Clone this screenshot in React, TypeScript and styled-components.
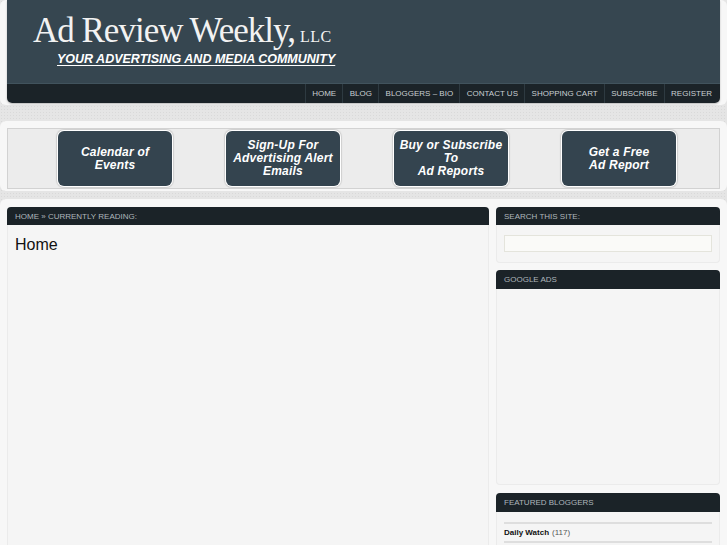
import React from "react";
import styled, { createGlobalStyle } from "styled-components";

const Global = createGlobalStyle`
  html, body { margin: 0; padding: 0; }
  body {
    background-color: #e5e5e5;
    background-image: radial-gradient(#d9d9d9 0.8px, transparent 0.9px);
    background-size: 3px 3px;
    font-family: "Liberation Sans", Arial, sans-serif;
  }
`;

const Page = styled.div`
  display: flex;
  flex-direction: column;
  width: 727px;
  height: 545px;
  overflow: hidden;
`;

const Wrap = styled.div<{ $pt: number; $pb: number; $mt: number }>`
  background: #f7f7f7;
  border-radius: 6px;
  padding: ${(p) => p.$pt}px 7px ${(p) => p.$pb}px;
  margin-top: ${(p) => p.$mt}px;
`;

const Header = styled.header`
  display: flex;
  flex-direction: column;
  border-radius: 0 0 5px 5px;
  overflow: hidden;
  box-shadow: 0 1px 2px rgba(0, 0, 0, 0.25);
`;

const Brand = styled.div`
  height: 84px;
  background: #364650;
  border-bottom: 1px solid #41535d;
  display: flex;
  flex-direction: column;
  padding-left: 26px;
  box-sizing: border-box;
`;

const Title = styled.div`
  font-family: "Liberation Serif", "Times New Roman", serif;
  color: #f2f2f2;
  font-size: 35px;
  letter-spacing: -1px;
  line-height: 34px;
  margin-top: 14px;
  white-space: nowrap;
`;

const Llc = styled.span`
  font-size: 16px;
  letter-spacing: 0.5px;
  margin-left: 5px;
`;

const Tagline = styled.div`
  color: #ffffff;
  font-weight: bold;
  font-style: italic;
  font-size: 12.5px;
  text-decoration: underline;
  text-underline-offset: 2px;
  margin-left: 24px;
  margin-top: -2px;
  white-space: nowrap;
`;

const Nav = styled.nav`
  height: 19px;
  background: #1b2328;
  display: flex;
  justify-content: flex-end;
  padding-right: 7px;
`;

const NavItem = styled.a`
  display: flex;
  align-items: center;
  padding: 0 6.3px;
  font-size: 8px;
  color: #c9cfd2;
  text-transform: uppercase;
  border-left: 1px solid #2e3a41;
  white-space: nowrap;
  text-decoration: none;
  &:last-child {
    padding-right: 1px;
  }
`;

const Strip = styled.div`
  height: 61px;
  background: #ececec;
  border: 1px solid #d2d2d2;
  box-sizing: border-box;
  display: flex;
  align-items: center;
  padding-left: 50px;
  gap: 54px;
`;

const PromoButton = styled.a`
  width: 114px;
  height: 55px;
  box-sizing: border-box;
  border-radius: 6px;
  background: #34444f;
  box-shadow: 0 0 0 1px #ffffff, 0 0 1px 2px #cfcfcf;
  color: #ffffff;
  font-weight: bold;
  font-style: italic;
  font-size: 12px;
  line-height: 13px;
  text-align: center;
  display: flex;
  align-items: center;
  justify-content: center;
  letter-spacing: 0.2px;
  text-decoration: none;
`;

const Columns = styled.div`
  display: flex;
  gap: 7px;
  align-items: flex-start;
`;

const MainCol = styled.div`
  width: 482px;
  display: flex;
  flex-direction: column;
`;

const SideCol = styled.div`
  width: 224px;
  display: flex;
  flex-direction: column;
  gap: 7px;
`;

const PanelHead = styled.div<{ $h: number }>`
  height: ${(p) => p.$h}px;
  background: #1b2328;
  border-radius: 4px 4px 0 0;
  color: #aeb6bb;
  font-size: 8px;
  text-transform: uppercase;
  display: flex;
  align-items: center;
  padding-left: 8px;
  white-space: nowrap;
`;

const PanelBody = styled.div<{ $h: number }>`
  height: ${(p) => p.$h}px;
  box-sizing: border-box;
  background: #f5f5f5;
  border: 1px solid #ebebeb;
  border-top: none;
  border-radius: 0 0 4px 4px;
  padding: 10px 7px 0 7px;
`;

const Heading = styled.h1`
  margin: 2px 0 0 0;
  font-size: 16px;
  font-weight: normal;
  color: #111;
  line-height: 16px;
`;

const SearchInput = styled.div`
  height: 15px;
  border: 1px solid #e4e4dc;
  background: #fafaf8;
`;

const BloggerList = styled.ul`
  list-style: none;
  margin: 0;
  padding: 0;
  border-top: 2px solid #dedede;
`;

const BloggerRow = styled.li`
  height: 17px;
  display: flex;
  align-items: center;
  font-size: 8px;
  color: #555;
  border-bottom: 2px solid #dedede;
  b {
    color: #111;
    margin-right: 3px;
  }
`;

const navItems = [
  "Home",
  "Blog",
  "Bloggers – Bio",
  "Contact Us",
  "Shopping Cart",
  "Subscribe",
  "Register",
];

const promos: string[][] = [
  ["Calendar of", "Events"],
  ["Sign-Up For", "Advertising Alert", "Emails"],
  ["Buy or Subscribe", "To", "Ad Reports"],
  ["Get a Free", "Ad Report"],
];

export default function App() {
  return (
    <Page>
      <Global />
      <Wrap $pt={0} $pb={2} $mt={0}>
        <Header>
          <Brand>
            <Title>
              Ad Review Weekly,<Llc>LLC</Llc>
            </Title>
            <Tagline>YOUR ADVERTISING AND MEDIA COMMUNITY</Tagline>
          </Brand>
          <Nav>
            {navItems.map((n) => (
              <NavItem key={n}>{n}</NavItem>
            ))}
          </Nav>
        </Header>
      </Wrap>
      <Wrap $pt={7} $pb={2} $mt={16}>
        <Strip>
          {promos.map((lines, i) => (
            <PromoButton key={i}>
              <span>
                {lines.map((l, j) => (
                  <React.Fragment key={j}>
                    {j > 0 && <br />}
                    {l}
                  </React.Fragment>
                ))}
              </span>
            </PromoButton>
          ))}
        </Strip>
      </Wrap>
      <Wrap $pt={8} $pb={0} $mt={8} style={{ flex: 1 }}>
        <Columns>
          <MainCol>
            <PanelHead $h={18}>Home » Currently Reading:</PanelHead>
            <PanelBody $h={400}>
              <Heading>Home</Heading>
            </PanelBody>
          </MainCol>
          <SideCol>
            <div>
              <PanelHead $h={18}>Search this site:</PanelHead>
              <PanelBody $h={38}>
                <SearchInput />
              </PanelBody>
            </div>
            <div>
              <PanelHead $h={19}>Google Ads</PanelHead>
              <PanelBody $h={196} />
            </div>
            <div style={{ marginTop: 1 }}>
              <PanelHead $h={19}>Featured Bloggers</PanelHead>
              <PanelBody $h={60}>
                <BloggerList>
                  <BloggerRow>
                    <b>Daily Watch</b>(117)
                  </BloggerRow>
                  <BloggerRow />
                </BloggerList>
              </PanelBody>
            </div>
          </SideCol>
        </Columns>
      </Wrap>
    </Page>
  );
}
